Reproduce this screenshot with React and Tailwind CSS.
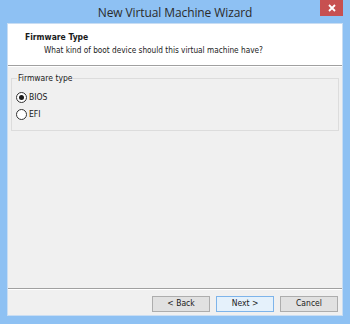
const body = { fontFamily: '"DejaVu Sans Condensed", "DejaVu Sans", Tahoma, sans-serif' };

function Radio({ checked, label }) {
  return (
    <label className="flex items-center gap-[2px] h-[17px]">
      <span className="w-[11px] h-[11px] rounded-full border border-[#333] bg-white flex items-center justify-center">
        {checked && <span className="w-[5px] h-[5px] rounded-full bg-[#1a1a1a]" />}
      </span>
      <span>{label}</span>
    </label>
  );
}

function Button({ children, primary }) {
  return (
    <button
      className={`w-[58px] h-[16px] border text-[8.5px] leading-none text-[#1a1a1a] ${
        primary ? 'border-[#7eb4ea] bg-[#e5f1fb]' : 'border-[#adadad] bg-[#e1e1e1]'
      }`}
      style={body}
    >
      {children}
    </button>
  );
}

export default function App() {
  return (
    <div className="w-[350px] h-[324px] bg-[#8ec1f3] flex flex-col overflow-hidden" style={body}>
      <div className="relative h-[23px] flex items-center justify-center">
        <span className="text-[12px] text-[#2b2b2b] mt-[2px] tracking-[-0.1px]" style={{ fontFamily: '"Open Sans", "Noto Sans", sans-serif' }}>
          New Virtual Machine Wizard
        </span>
        <span className="absolute right-[7px] top-0 w-[23px] h-[16px] bg-[#c75050] flex items-center justify-center">
          <svg width="8" height="8" viewBox="0 0 8 8">
            <path d="M1 1L7 7M7 1L1 7" stroke="#fff" strokeWidth="1.8" />
          </svg>
        </span>
      </div>
      <div className="flex-1 mx-[7px] mb-[8px] border border-[#c8ddf3] bg-[#f0f0f0] flex flex-col text-[8.2px] text-[#1a1a1a]">
        <div className="bg-white h-[41px] pl-[17px] pt-[7px] leading-[13px]">
          <div className="font-bold text-[8.5px]">Firmware Type</div>
          <div className="pl-[19px]">What kind of boot device should this virtual machine have?</div>
        </div>
        <div className="border-t border-[#a0a0a0] border-b border-b-white" />
        <div className="flex-1 px-[3px] pt-[5px]">
          <fieldset className="border border-[#dcdcdc] h-[59px] px-[4px] pb-[4px] text-[8.5px]">
            <legend className="px-[1px] ml-[1px] leading-[12px]">Firmware type</legend>
            <div className="flex flex-col mt-[5px]">
              <Radio checked label="BIOS" />
              <Radio label="EFI" />
            </div>
          </fieldset>
        </div>
        <div className="border-t border-[#a0a0a0] border-b border-b-white" />
        <div className="h-[25px] flex items-center justify-end gap-[6px] pr-[4px] pt-[2px]">
          <Button>&lt; Back</Button>
          <Button primary>Next &gt;</Button>
          <Button>Cancel</Button>
        </div>
      </div>
    </div>
  );
}
